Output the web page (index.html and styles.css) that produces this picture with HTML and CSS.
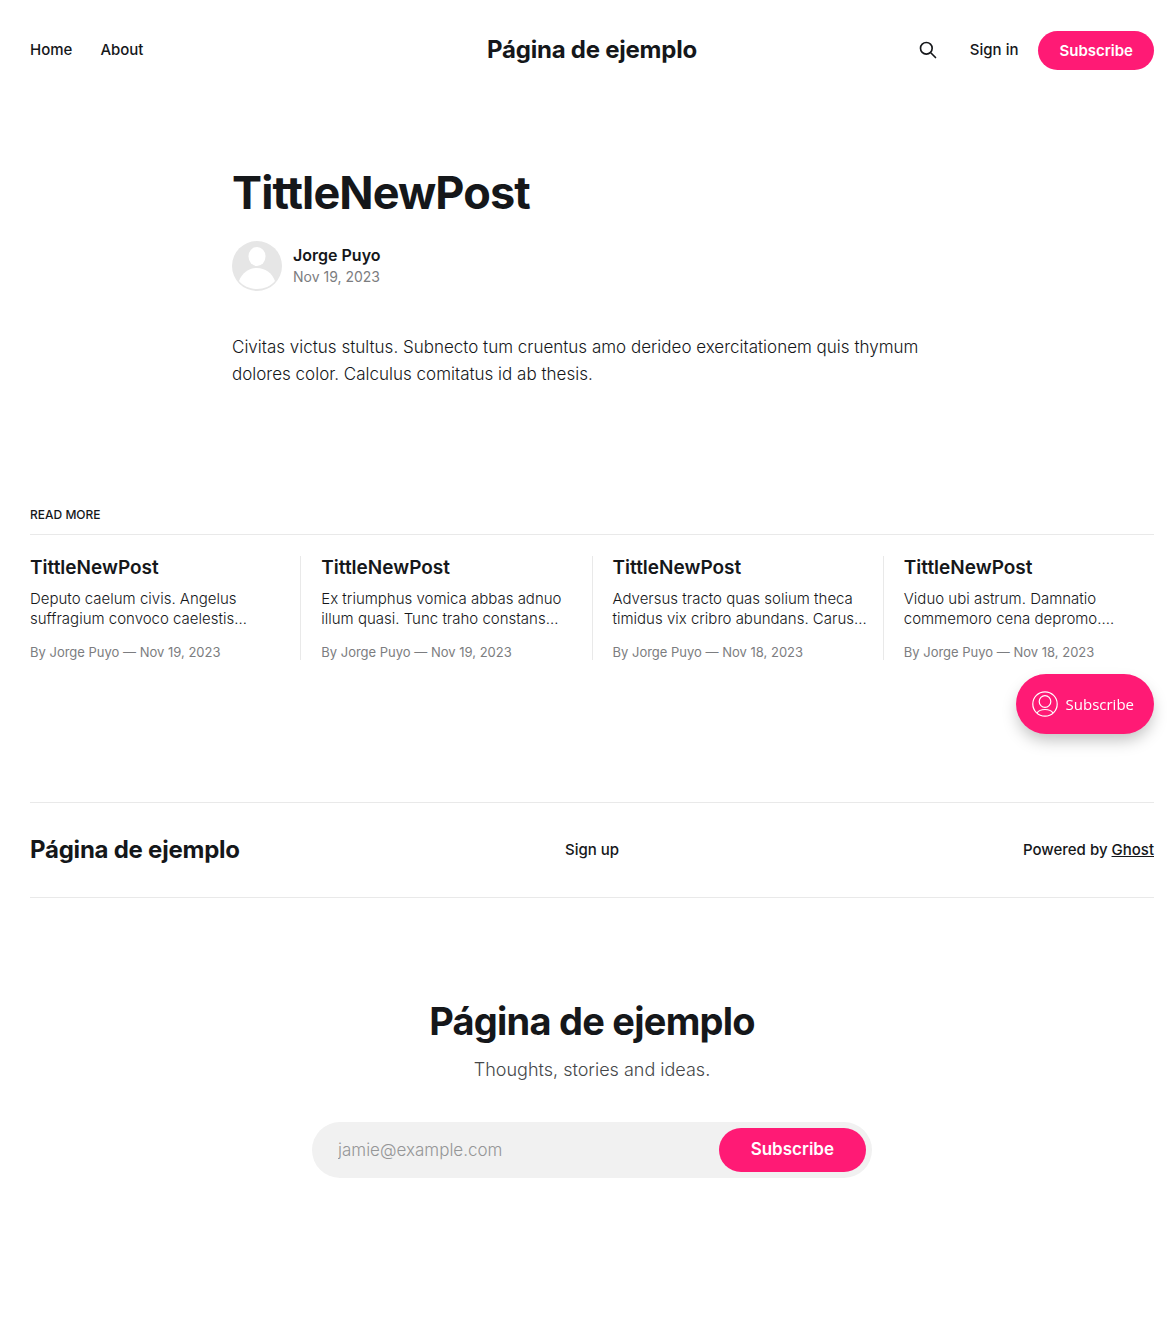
FILE: index.html
```html
<!DOCTYPE html>
<html lang="en">
<head>
<meta charset="utf-8">
<meta name="viewport" content="width=device-width, initial-scale=1">
<title>TittleNewPost</title>
<link rel="stylesheet" href="styles.css">
</head>
<body>
<header class="head">
  <nav class="head-menu"><a href="#">Home</a><a href="#">About</a></nav>
  <a class="site-name" href="#">Página de ejemplo</a>
  <div class="head-actions">
    <button class="search" type="button" aria-label="Search">
      <svg width="20" height="20" viewBox="0 0 24 24" fill="none" stroke="currentColor" stroke-width="2"><path stroke-linecap="round" stroke-linejoin="round" d="M21 21l-6-6m2-5a7 7 0 11-14 0 7 7 0 0114 0z"/></svg>
    </button>
    <a class="sign-in" href="#">Sign in</a>
    <a class="head-subscribe" href="#">Subscribe</a>
  </div>
</header>
<main>
  <article class="post">
    <h1>TittleNewPost</h1>
    <div class="byline">
      <span class="avatar"><svg width="50" height="50" viewBox="0 0 50 50"><circle cx="25" cy="25" r="25" fill="#e6e6e6"/><ellipse cx="25" cy="15.500" rx="8.500" ry="9.500" fill="#fff"/><path d="M7 40C10 32 17 27 25 27s15 5 18 13c-4 5-11 8-18 8S11 45 7 40z" fill="#fff"/></svg></span>
      <div><a class="author" href="#">Jorge Puyo</a><time datetime="2023-11-19">Nov 19, 2023</time></div>
    </div>
    <p class="content">Civitas victus stultus. Subnecto tum cruentus amo derideo exercitationem quis thymum dolores color. Calculus comitatus id ab thesis.</p>
  </article>
  <section class="more">
    <h2>Read more</h2>
    <div class="feed">
      <article class="card"><h3>TittleNewPost</h3><p>Deputo caelum civis. Angelus suffragium convoco caelestis…</p><footer>By Jorge Puyo — Nov 19, 2023</footer></article>
      <article class="card"><h3>TittleNewPost</h3><p>Ex triumphus vomica abbas adnuo illum quasi. Tunc traho constans…</p><footer>By Jorge Puyo — Nov 19, 2023</footer></article>
      <article class="card"><h3>TittleNewPost</h3><p>Adversus tracto quas solium theca timidus vix cribro abundans. Carus…</p><footer>By Jorge Puyo — Nov 18, 2023</footer></article>
      <article class="card"><h3>TittleNewPost</h3><p>Viduo ubi astrum. Damnatio commemoro cena depromo.…</p><footer>By Jorge Puyo — Nov 18, 2023</footer></article>
    </div>
  </section>
</main>
<footer class="foot">
  <div class="foot-bar">
    <a class="site-name" href="#">Página de ejemplo</a>
    <a class="sign-up" href="#">Sign up</a>
    <div class="powered">Powered by <a href="#">Ghost</a></div>
  </div>
  <section class="signup">
    <h2>Página de ejemplo</h2>
    <p>Thoughts, stories and ideas.</p>
    <form class="signup-form">
      <input type="email" placeholder="jamie@example.com" aria-label="Email address">
      <button type="button">Subscribe</button>
    </form>
  </section>
</footer>
<button class="portal" type="button">
  <svg width="26" height="26" viewBox="0 0 26 26" fill="none" stroke="currentColor" stroke-width="1.200"><circle cx="13" cy="13" r="12.200"/><circle cx="13" cy="10.500" r="5.800"/><path d="M5 22c2-3 5-3.500 8-3.500s6 .5 8 3.500"/></svg>
  <span>Subscribe</span>
</button>
</body>
</html>
```
FILE: styles.css
```css
* { box-sizing: border-box; margin: 0; padding: 0; }
body { background: #fff; color: #15171a; font-family: Inter, sans-serif; font-size: 15px; line-height: 24px; }
a { color: inherit; text-decoration: none; }
button, input { font: inherit; border: 0; }
button { cursor: pointer; }
svg { display: block; }

.head { display: grid; grid-template-columns: 1fr auto 1fr; align-items: center; height: 100px; padding: 0 13px 0 30px; font-weight: 500; }
.head-menu { display: flex; gap: 28px; }
.site-name { font-size: 24px; line-height: 32px; font-weight: 700; letter-spacing: -0.01em; }
.head-actions { display: flex; align-items: center; justify-content: flex-end; }
.search { width: 32px; height: 32px; display: grid; place-items: center; background: none; color: inherit; margin-right: 26px; }
.sign-in { margin-right: 20px; }
.head-subscribe { padding: 8px 21px 7px; border-radius: 48px; background: #ff1a75; color: #fff; font-weight: 600; }

main { margin: 0 13px 0 30px; }
.post { max-width: 720px; margin: 0 auto; padding: 66px 0 0; }
.post h1 { font-size: 45px; line-height: 54px; font-weight: 700; letter-spacing: -0.02em; }
.byline { display: flex; align-items: center; gap: 11px; margin-top: 21px; }
.author { display: block; font-size: 16px; line-height: 22px; font-weight: 600; }
.byline time { display: block; font-size: 14px; line-height: 22px; color: #7c7d80; }
.content { margin-top: 43px; font-size: 17px; line-height: 27px; font-weight: 300; }

.more { margin-top: 115px; }
.more h2 { padding-bottom: 7px; border-bottom: 1px solid #e9e9e9; font-size: 12px; line-height: 24px; font-weight: 500; text-transform: uppercase; }
.feed { display: grid; grid-template-columns: repeat(4, 1fr); gap: 41px; margin-top: 21px; }
.card { position: relative; }
.card + .card::before { content: ""; position: absolute; top: 0; bottom: 0; left: -21px; width: 1px; background: #e9e9e9; }
.card h3 { font-size: 19px; line-height: 24px; font-weight: 600; }
.card p { margin: 9px -12px 0 0; font-size: 15px; line-height: 20px; font-weight: 300; }
.card footer { margin-top: 15px; font-size: 13px; line-height: 16px; color: #7c7d80; }

.foot { margin: 142px 13px 0 30px; }
.foot-bar { display: grid; grid-template-columns: 1fr auto 1fr; align-items: center; height: 96px; border-top: 1px solid #e9e9e9; border-bottom: 1px solid #e9e9e9; font-weight: 500; }
.powered { text-align: right; }
.powered a { text-decoration: underline; }
.signup { padding: 99px 0 160px; text-align: center; }
.signup h2 { font-size: 38px; line-height: 48px; font-weight: 700; letter-spacing: -0.02em; }
.signup p { margin-top: 12px; font-size: 18px; line-height: 26px; font-weight: 300; color: #454749; }
.signup-form { display: flex; max-width: 560px; height: 56px; margin: 39px auto 0; padding: 6px; border-radius: 56px; background: #f1f1f1; }
.signup-form input { flex: 1; min-width: 0; padding: 0 20px; background: none; font-size: 17px; font-weight: 300; outline: 0; }
.signup-form input::placeholder { color: #959697; }
.signup-form button { padding: 0 32px 2px; border-radius: 44px; background: #ff1a75; color: #fff; font-size: 17px; font-weight: 600; }

.portal { position: fixed; right: 13px; top: 674px; display: flex; align-items: center; gap: 8px; height: 60px; padding: 0 20px 0 16px; border-radius: 60px; background: #ff1a75; color: #fff; font-family: "Open Sans", sans-serif; font-size: 15px; box-shadow: 0 8px 16px -2px rgba(0, 0, 0, 0.25); }
```
